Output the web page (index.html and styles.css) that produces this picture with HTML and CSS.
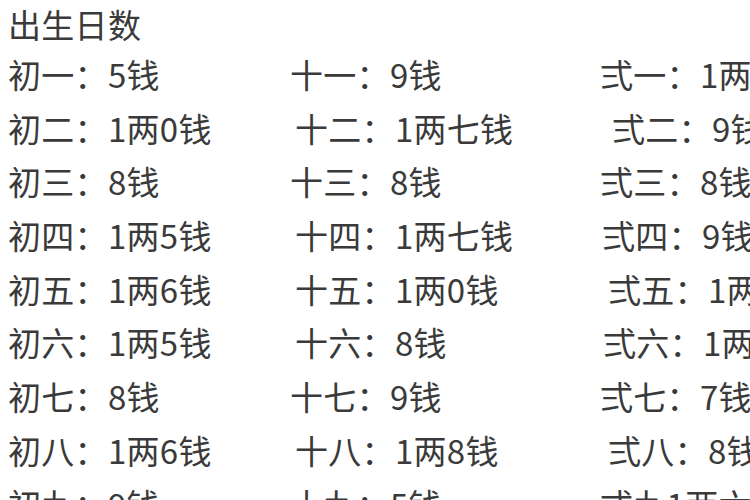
FILE: index.html
```html
<!DOCTYPE html>
<html lang="zh-CN">
<head>
<meta charset="utf-8">
<link rel="stylesheet" href="styles.css">
</head>
<body>
<div class="page">
  <div class="title">出生日数</div>
  <div class="table">
    <span class="cell">初一：5钱</span><span class="cell">十一：9钱</span><span class="cell">弍一：1两</span>
    <span class="cell">初二：1两0钱</span><span class="cell s5">十二：1两七钱</span><span class="cell s12">弍二：9钱</span>
    <span class="cell">初三：8钱</span><span class="cell">十三：8钱</span><span class="cell">弍三：8钱</span>
    <span class="cell">初四：1两5钱</span><span class="cell s5">十四：1两七钱</span><span class="cell s2">弍四：9钱</span>
    <span class="cell">初五：1两6钱</span><span class="cell s5">十五：1两0钱</span><span class="cell s8">弍五：1两</span>
    <span class="cell">初六：1两5钱</span><span class="cell s5">十六：8钱</span><span class="cell s3">弍六：1两</span>
    <span class="cell">初七：8钱</span><span class="cell">十七：9钱</span><span class="cell">弍七：7钱</span>
    <span class="cell">初八：1两6钱</span><span class="cell s5">十八：1两8钱</span><span class="cell s8">弍八：8钱</span>
    <span class="cell">初九：9钱</span><span class="cell">十九：5钱</span><span class="cell">弍九1两六钱</span>
  </div>
</div>
</body>
</html>
```

FILE: styles.css
```css
html, body {
  margin: 0;
  padding: 0;
  background: #ffffff;
  overflow: hidden;
}
.page {
  width: 750px;
  height: 500px;
  overflow: hidden;
  padding: 0 0 0 8px;
  box-sizing: border-box;
  font-family: "Noto Sans CJK SC", "Liberation Sans", sans-serif;
  font-size: 33px;
  color: #3a3a3a;
}
.title {
  line-height: 48px;
  white-space: nowrap;
  letter-spacing: 0.3px;
}
.table {
  display: grid;
  grid-template-columns: 282px 310px 200px;
  grid-auto-rows: 53.7px;
  align-items: center;
  line-height: 53.7px;
}
.cell {
  white-space: nowrap;
  letter-spacing: 0.3px;
}
.s2 { padding-left: 2px; }
.s3 { padding-left: 3px; }
.s5 { padding-left: 5px; }
.s8 { padding-left: 8px; }
.s12 { padding-left: 12px; }
```
